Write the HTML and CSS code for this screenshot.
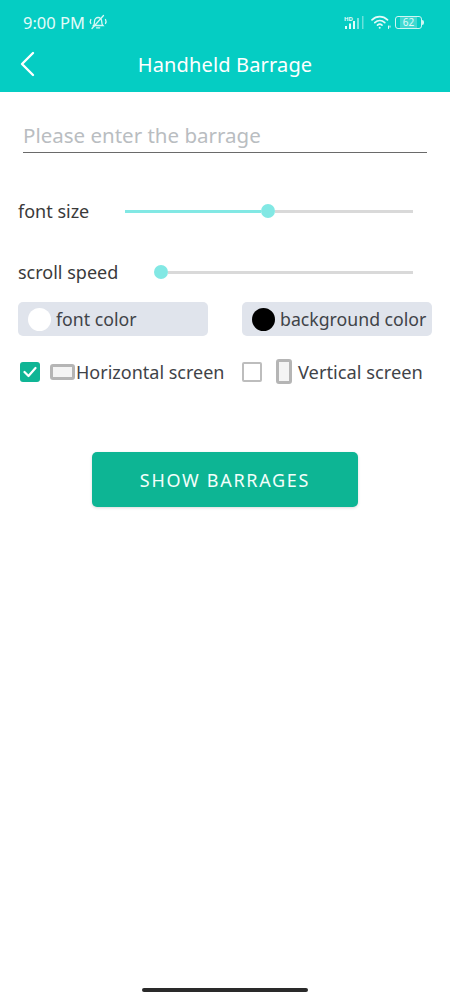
FILE: index.html
```html
<!DOCTYPE html>
<html lang="en">
<head>
    <meta charset="UTF-8">
    <meta name="viewport" content="width=device-width, initial-scale=1.0">
    <title>Handheld Barrage</title>
    <link rel="stylesheet" href="styles.css">
</head>
<body>
    <div class="page">
        <header class="header">
            <div class="status">
                <div class="status-left">
                    <span class="clock">9:00 PM</span>
                    <svg class="bell" width="20" height="16" viewBox="0 0 20 16" fill="none" stroke="#d8f8f5" stroke-width="1.3" stroke-linecap="round">
                        <path d="M5.5 11.5c1-1 1-2 1-4 0-2.2 1.600-4 3.600-4s3.600 1.800 3.600 4c0 2 .3 3 1.300 4z"/>
                        <path d="M8.500 13.800h3.200"/>
                        <path d="M4 14.500 15.500 1.500"/>
                        <path d="M2.800 5.500c-.7 1.300-.7 2.700 0 4"/>
                        <path d="M17.500 5.500c.7 1.300.7 2.700 0 4"/>
                    </svg>
                </div>
                <div class="status-right">
                    <svg class="signal" width="21" height="15" viewBox="0 0 21 15" fill="#e4fbf9">
                        <text x="0" y="5.500" class="hd">HD</text>
                        <rect x="1" y="11" width="2" height="3"/>
                        <rect x="5" y="8.500" width="2" height="5.500"/>
                        <rect x="9" y="6" width="2" height="8"/>
                        <rect x="13" y="3" width="2" height="11" opacity=".55"/>
                        <rect x="18" y="1" width="1.500" height="13" opacity=".45"/>
                    </svg>
                    <svg class="wifi" width="20" height="16" viewBox="0 0 20 16" fill="none" stroke="#e4fbf9" stroke-width="1.700" stroke-linecap="round">
                        <path d="M1 5.800C5.500 1.500 12 1.500 16.500 5.800"/>
                        <path d="M3.800 8.600c3-2.800 7-2.800 10 0"/>
                        <path d="M6.500 11.200c1.500-1.300 3-1.300 4.500 0"/>
                        <circle cx="8.700" cy="13.800" r="1" fill="#e4fbf9" stroke="none"/>
                        <path d="M17.500 12v2.500M19 12v1.200" stroke-width="1"/>
                    </svg>
                    <div class="battery-wrap">
                        <div class="battery"><span class="battery-level">62</span></div>
                        <span class="battery-cap"></span>
                    </div>
                </div>
            </div>
            <div class="nav">
                <svg class="back" width="15" height="26" viewBox="0 0 15 26" fill="none" stroke="#fff" stroke-width="2.400" stroke-linecap="round" stroke-linejoin="round">
                    <path d="M13 2 2 13l11 11"/>
                </svg>
                <h1 class="title">Handheld Barrage</h1>
            </div>
        </header>

        <main class="content">
            <div class="barrage-input">Please enter the barrage</div>

            <div class="slider-row font-size-row">
                <span class="label">font size</span>
                <div class="slider font-size-slider">
                    <div class="fill"></div>
                    <div class="thumb"></div>
                    <div class="rest"></div>
                </div>
            </div>

            <div class="slider-row speed-row">
                <span class="label">scroll speed</span>
                <div class="slider speed-slider">
                    <div class="thumb"></div>
                    <div class="rest"></div>
                </div>
            </div>

            <div class="color-row">
                <div class="color-btn">
                    <span class="swatch white"></span>
                    <span>font color</span>
                </div>
                <div class="color-btn">
                    <span class="swatch black"></span>
                    <span>background color</span>
                </div>
            </div>

            <div class="orient-row">
                <div class="orient horizontal">
                    <span class="check checked">
                        <svg width="14" height="12" viewBox="0 0 14 12" fill="none" stroke="#fff" stroke-width="2.200" stroke-linecap="round" stroke-linejoin="round">
                            <path d="M1.500 6 5.500 10 12.500 2"/>
                        </svg>
                    </span>
                    <span class="screen-wide"></span>
                    <span>Horizontal screen</span>
                </div>
                <div class="orient vertical">
                    <span class="check"></span>
                    <span class="screen-tall"></span>
                    <span>Vertical screen</span>
                </div>
            </div>

            <button class="show-btn">SHOW BARRAGES</button>
        </main>

        <div class="home-bar"></div>
    </div>
</body>
</html>
```

FILE: styles.css
```css
* {
    box-sizing: border-box;
}
body {
    margin: 0;
    background-color: #fff;
    font-family: "Noto Sans", sans-serif;
    color: #3f4348;
}
.page {
    display: flex;
    flex-direction: column;
    height: 1000px;
}
.header {
    height: 92px;
    background-color: #05cdc3;
    color: #fff;
}
.status {
    display: flex;
    justify-content: space-between;
    align-items: center;
    height: 42px;
    padding: 2px 26px 0 23px;
}
.status-left,
.status-right {
    display: flex;
    align-items: center;
}
.status-right {
    gap: 4px;
}
.signal {
    margin-right: 2px;
}
.clock {
    font-size: 16.500px;
    color: #e4fbf9;
}
.bell {
    margin-left: 3px;
}
.hd {
    font-family: "Noto Sans", sans-serif;
    font-size: 6px;
    font-weight: 700;
}
.battery-wrap {
    display: flex;
    align-items: center;
}
.battery {
    display: flex;
    align-items: center;
    justify-content: center;
    width: 27px;
    height: 13px;
    border: 1px solid #d0f6f3;
    border-radius: 3px;
}
.battery-cap {
    width: 2px;
    height: 5px;
    border-radius: 0 2px 2px 0;
    background-color: #d0f6f3;
}
.battery-level {
    font-size: 10px;
    line-height: 11px;
    color: #e4fbf9;
    background-color: #3fd9d1;
    padding: 0 3px;
}
.nav {
    display: flex;
    align-items: center;
    justify-content: center;
    height: 44px;
}
.back {
    flex: none;
    margin-left: 20px;
    margin-right: -35px;
}
.title {
    flex: 1;
    margin: 0;
    text-align: center;
    font-size: 20px;
    font-weight: 400;
    letter-spacing: 0.15px;
}
.content {
    display: flex;
    flex-direction: column;
    padding: 0 18px;
}
.barrage-input {
    height: 61px;
    margin: 0 5px;
    padding-top: 29px;
    width: 404px;
    border-bottom: 1px solid #6a6a6a;
    font-size: 20.500px;
    line-height: 28px;
    color: #b9bdc1;
}
.slider-row {
    display: flex;
    align-items: center;
    height: 20px;
    font-size: 18px;
}
.font-size-row {
    margin-top: 48px;
}
.speed-row {
    margin-top: 41px;
}
.label {
    color: #3a3a3a;
}
.slider {
    display: flex;
    align-items: center;
    margin-left: auto;
    margin-right: 19px;
}
.font-size-slider {
    width: 288px;
}
.speed-slider {
    width: 259px;
}
.fill {
    width: 136px;
    height: 3px;
    background-color: #82e8e4;
}
.thumb {
    flex: none;
    width: 14px;
    height: 14px;
    border-radius: 50%;
    background-color: #82e8e4;
}
.rest {
    flex: 1;
    height: 3px;
    background-color: #d9d9d9;
}
.color-row {
    display: flex;
    justify-content: space-between;
    margin-top: 20px;
}
.color-btn {
    display: flex;
    align-items: center;
    gap: 5px;
    width: 190px;
    height: 34px;
    padding-left: 10px;
    border-radius: 5px;
    background-color: #e0e4ec;
    font-size: 17.700px;
}
.swatch {
    flex: none;
    width: 23px;
    height: 23px;
    border-radius: 50%;
}
.swatch.white {
    background-color: #fff;
}
.swatch.black {
    background-color: #000;
}
.orient-row {
    display: flex;
    margin-top: 22px;
    font-size: 18px;
}
.orient {
    display: flex;
    align-items: center;
    height: 27px;
}
.horizontal {
    width: 224px;
    padding-left: 2px;
}
.vertical {
    font-size: 18.300px;
}
.check {
    display: flex;
    align-items: center;
    justify-content: center;
    flex: none;
    width: 20px;
    height: 20px;
    border: 2px solid #bdbdbd;
    border-radius: 2px;
}
.check.checked {
    border: none;
    border-radius: 3px;
    background-color: #0fb595;
}
.screen-wide {
    flex: none;
    width: 25px;
    height: 16px;
    margin: 0 1px 0 10px;
    border: 3px solid #b5b5b5;
    border-radius: 3px;
    background-color: #f4f4f4;
}
.screen-tall {
    flex: none;
    width: 16px;
    height: 25px;
    margin: 0 6px 0 14px;
    border: 3px solid #b5b5b5;
    border-radius: 3px;
    background-color: #f4f4f4;
}
.show-btn {
    align-self: center;
    width: 266px;
    height: 55px;
    margin-top: 67px;
    border: none;
    border-radius: 5px;
    background-color: #0db594;
    box-shadow: 0 1px 3px rgba(0, 0, 0, 0.15);
    color: #f2fffb;
    font-family: "Noto Sans", sans-serif;
    font-size: 18px;
    letter-spacing: 1.700px;
}
.home-bar {
    align-self: center;
    flex: none;
    width: 166px;
    height: 4px;
    margin-top: auto;
    margin-bottom: 8px;
    border-radius: 2px;
    background-color: #2a2a2a;
}
```
